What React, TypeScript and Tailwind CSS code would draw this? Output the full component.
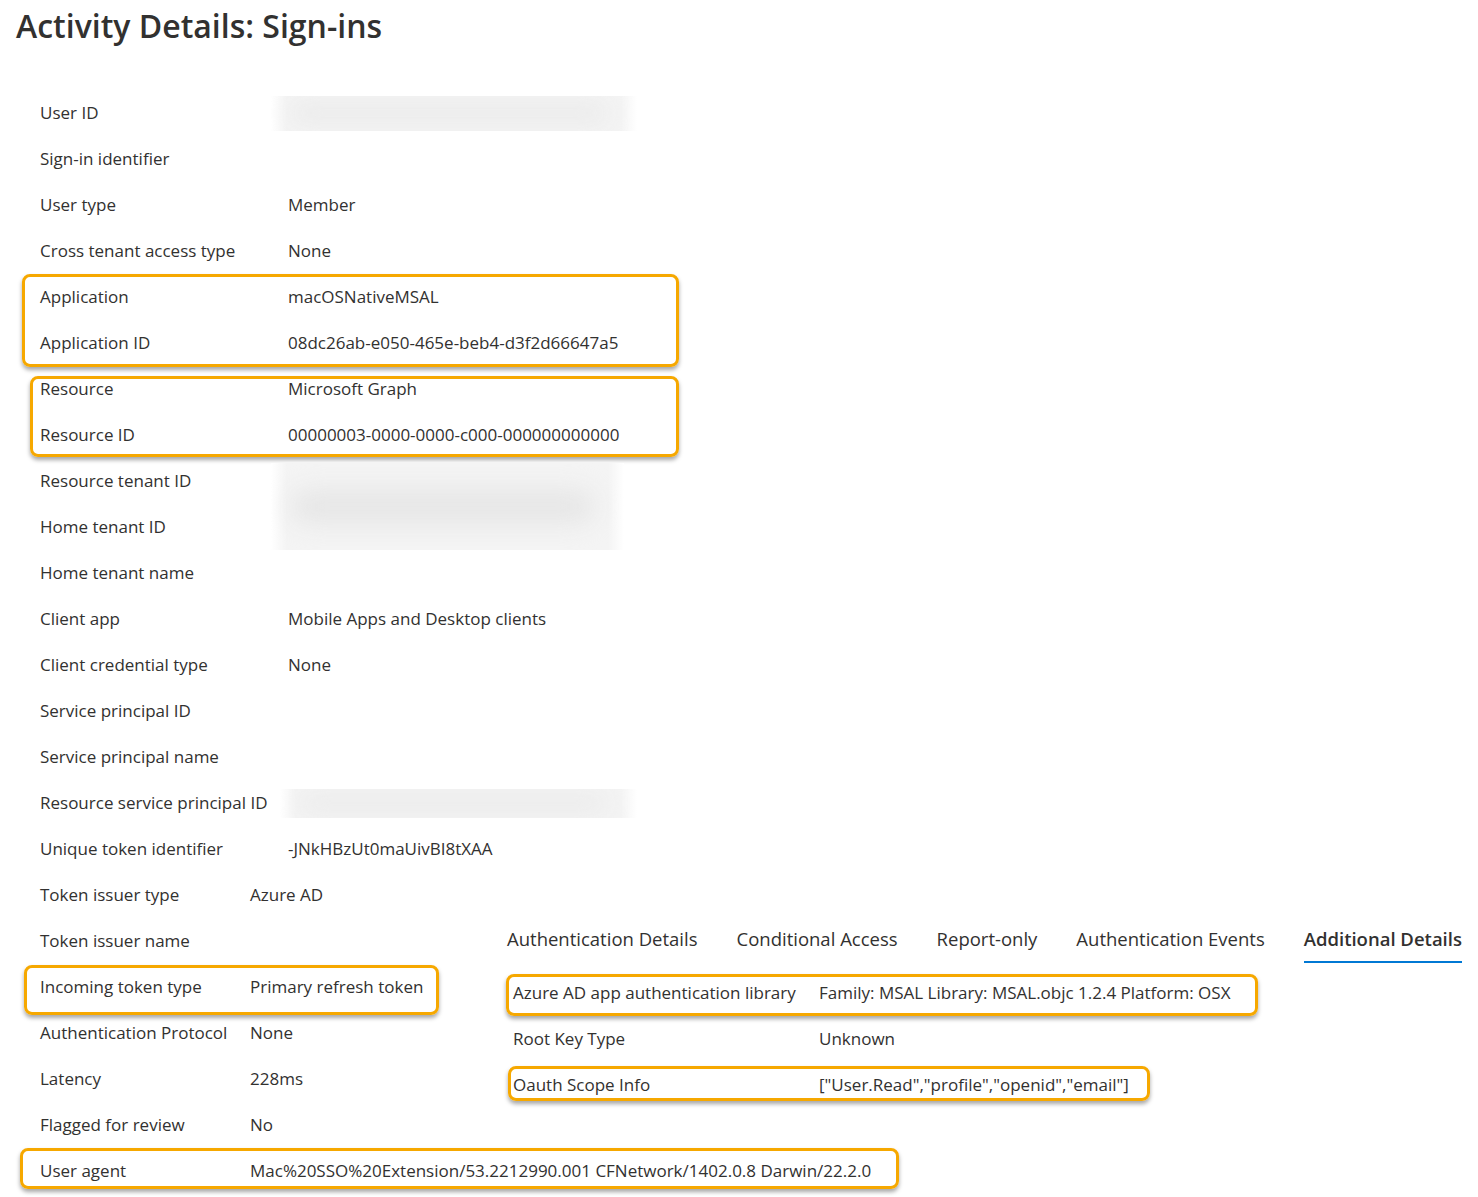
import type { ReactNode } from "react";

const font = { fontFamily: '"Open Sans", "Noto Sans", sans-serif' };

const Row = ({
  label,
  value,
  labelWidth = "w-[248px]",
}: {
  label: string;
  value?: ReactNode;
  labelWidth?: string;
}) => (
  <div className="flex items-center h-[46px] whitespace-nowrap">
    <div className={`${labelWidth} shrink-0`}>{label}</div>
    <div>{value}</div>
  </div>
);

const Blur = ({ className }: { className: string }) => (
  <div className={`relative bg-[#f4f4f4] overflow-hidden ${className}`}>
    <div className="absolute inset-y-0 left-0 w-[16px] bg-gradient-to-r from-white to-transparent" />
    <div className="absolute inset-y-0 right-0 w-[16px] bg-gradient-to-l from-white to-transparent" />
    <div className="absolute left-[20px] right-[30px] top-1/2 -translate-y-1/2 h-[40%] rounded-full bg-[#e6e6e6] blur-md" />
  </div>
);

// orange annotation frame drawn over a group of rows
const Mark = ({ className, children }: { className: string; children: ReactNode }) => (
  <div className="relative">
    {children}
    <div
      className={`absolute border-[3px] border-[#f6a800] rounded-[8px] shadow-[0_3px_4px_rgba(0,0,0,0.35)] pointer-events-none ${className}`}
    />
  </div>
);

const tabs = [
  "Authentication Details",
  "Conditional Access",
  "Report-only",
  "Authentication Events",
  "Additional Details",
];

const App = () => {
  return (
    <div className="min-h-screen w-[1478px] bg-white text-[#323130] text-[17px]" style={font}>
      <h1 className="h-[90px] pl-[16px] pt-[4px] text-[32px] font-semibold leading-[44px]">
        Activity Details: Sign-ins
      </h1>

      <div className="pl-[40px]">
        <Row label="User ID" value={<Blur className="-ml-[17px] w-[366px] h-[35px]" />} />
        <Row label="Sign-in identifier" />
        <Row label="User type" value="Member" />
        <Row label="Cross tenant access type" value="None" />

        <Mark className="-left-[18px] w-[657px] top-0 -bottom-[1px]">
          <Row label="Application" value="macOSNativeMSAL" />
          <Row label="Application ID" value="08dc26ab-e050-465e-beb4-d3f2d66647a5" />
        </Mark>

        <Mark className="-left-[10px] w-[649px] top-[10px] bottom-[1px]">
          <Row label="Resource" value="Microsoft Graph" />
          <Row label="Resource ID" value="00000003-0000-0000-c000-000000000000" />
        </Mark>

        <div className="flex">
          <div className="w-[248px] shrink-0">
            <Row label="Resource tenant ID" />
            <Row label="Home tenant ID" />
          </div>
          <Blur className="-ml-[17px] mt-[5px] w-[353px] h-[87px]" />
        </div>

        <Row label="Home tenant name" />
        <Row label="Client app" value="Mobile Apps and Desktop clients" />
        <Row label="Client credential type" value="None" />
        <Row label="Service principal ID" />
        <Row label="Service principal name" />
        <Row
          label="Resource service principal ID"
          value={<Blur className="-ml-[8px] w-[357px] h-[29px]" />}
        />
        <Row label="Unique token identifier" value="-JNkHBzUt0maUivBI8tXAA" />
        <Row label="Token issuer type" value="Azure AD" labelWidth="w-[210px]" />

        <div className="flex">
          {/* left column */}
          <div className="w-[467px] shrink-0">
            <Row label="Token issuer name" labelWidth="w-[210px]" />
            <Mark className="-left-[16px] w-[415px] top-[1px] -bottom-[5px]">
              <Row label="Incoming token type" value="Primary refresh token" labelWidth="w-[210px]" />
            </Mark>
            <Row label="Authentication Protocol" value="None" labelWidth="w-[210px]" />
            <Row label="Latency" value="228ms" labelWidth="w-[210px]" />
            <Row label="Flagged for review" value="No" labelWidth="w-[210px]" />
            <Mark className="-left-[20px] w-[879px] top-0 bottom-[5px]">
              <Row
                label="User agent"
                value="Mac%20SSO%20Extension/53.2212990.001 CFNetwork/1402.0.8 Darwin/22.2.0"
                labelWidth="w-[210px]"
              />
            </Mark>
          </div>

          {/* details panel */}
          <div className="flex-1">
            <div className="flex gap-[39px] h-[52px] whitespace-nowrap">
              {tabs.map((t) => (
                <div
                  key={t}
                  className={`h-[45px] pt-[7px] text-[18.5px] ${
                    t === "Additional Details"
                      ? "font-semibold border-b-2 border-[#0078d4]"
                      : ""
                  }`}
                >
                  {t}
                </div>
              ))}
            </div>
            <div className="pl-[6px]">
              <Mark className="-left-[7px] w-[752px] top-[4px] bottom-0">
                <Row
                  label="Azure AD app authentication library"
                  value="Family: MSAL Library: MSAL.objc 1.2.4 Platform: OSX"
                  labelWidth="w-[306px]"
                />
              </Mark>
              <Row label="Root Key Type" value="Unknown" labelWidth="w-[306px]" />
              <Mark className="-left-[5px] w-[642px] top-[4px] bottom-[7px]">
                <Row
                  label="Oauth Scope Info"
                  value={'["User.Read","profile","openid","email"]'}
                  labelWidth="w-[306px]"
                />
              </Mark>
            </div>
          </div>
        </div>
      </div>
    </div>
  );
};

export default App;
